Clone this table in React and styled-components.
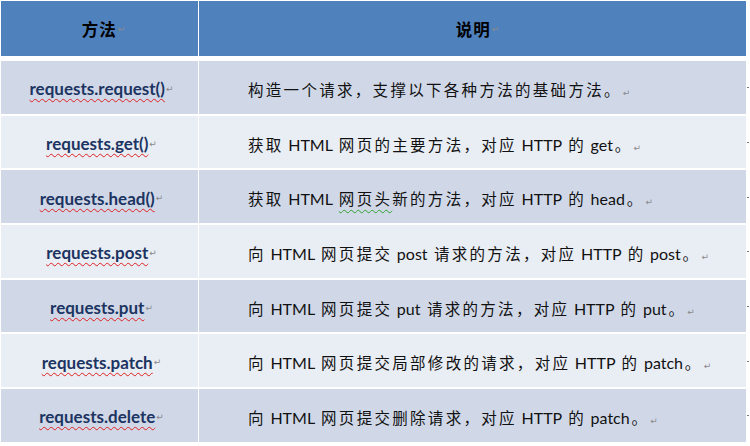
import React from 'react';
import styled, { createGlobalStyle } from 'styled-components';

const GlobalStyle = createGlobalStyle`
  html, body {
    margin: 0;
    padding: 0;
    background: #ffffff;
  }
`;

const Page = styled.div`
  width: 750px;
  height: 446px;
  padding: 1px 0 0 1px;
  box-sizing: border-box;
  overflow: hidden;
`;

const Table = styled.div`
  display: grid;
  grid-template-columns: 197px 547px;
  grid-template-rows: 58px repeat(7, 52.7px);
  column-gap: 1px;
  row-gap: 2px;
`;

const HeadCell = styled.div`
  height: 55px;
  align-self: start;
  background: #4f81bd;
  display: flex;
  align-items: center;
  justify-content: center;
  font-family: "Noto Sans CJK SC", sans-serif;
  font-weight: 700;
  font-size: 16.5px;
  letter-spacing: 1px;
  color: #000;
  padding-left: ${p => (p.$shift ? '10px' : '8px')};
`;

const Cell = styled.div`
  background: ${p => (p.$dark ? '#d0d8e8' : '#e9edf4')};
  display: flex;
  align-items: center;
  position: relative;
`;

const MethodCell = styled(Cell)`
  justify-content: center;
  padding: 3px 0 0 4px;
`;

const DescCell = styled(Cell)`
  padding: 3px 0 0 49px;

  &::after {
    content: '';
    position: absolute;
    right: -3px;
    top: 50%;
    width: 2px;
    height: 1px;
    background: #777;
  }
`;

const MethodName = styled.span`
  font-family: Lato, "Liberation Sans", sans-serif;
  font-weight: 700;
  font-size: 17px;
  color: #1c3461;
  text-decoration: underline wavy #e02020;
  text-decoration-thickness: 1px;
  text-underline-offset: 3px;
`;

const Desc = styled.span`
  font-family: "Noto Sans CJK SC", sans-serif;
  font-size: 15.5px;
  letter-spacing: 2.3px;
  color: #111;
  white-space: pre;
`;

const Latin = styled.span`
  font-family: Lato, "Liberation Sans", sans-serif;
  font-size: 16px;
  letter-spacing: 0;
  word-spacing: 0.5px;
  margin-right: 1.8px;
  color: #111;
`;

const Grammar = styled.span`
  text-decoration: underline wavy #2fa02f;
  text-decoration-thickness: 1px;
  text-underline-offset: 4px;
`;

const Mark = styled.span`
  font-family: "DejaVu Sans", sans-serif;
  font-weight: 400;
  font-size: 9px;
  color: #8a8a8a;
  margin-left: 1px;
  letter-spacing: 0;
`;

const rows = [
  ['requests.request()', '构造一个请求，支撑以下各种方法的基础方法。'],
  ['requests.get()', '获取 HTML 网页的主要方法，对应 HTTP 的 get。'],
  ['requests.head()', '获取 HTML [网页头]新的方法，对应 HTTP 的 head。'],
  ['requests.post', '向 HTML 网页提交 post 请求的方法，对应 HTTP 的 post。'],
  ['requests.put', '向 HTML 网页提交 put 请求的方法，对应 HTTP 的 put。'],
  ['requests.patch', '向 HTML 网页提交局部修改的请求，对应 HTTP 的 patch。'],
  ['requests.delete', '向 HTML 网页提交删除请求，对应 HTTP 的 patch。'],
];

// split a description into CJK runs and latin runs, [..] = grammar squiggle
function renderDesc(text) {
  const out = [];
  text.split(/(\[[^\]]+\])/).forEach((chunk, i) => {
    if (chunk.startsWith('[')) {
      out.push(<Grammar key={'g' + i}>{chunk.slice(1, -1)}</Grammar>);
      return;
    }
    chunk.split(/([\x00-\x7F]+)/).forEach((part, j) => {
      if (!part) return;
      if (/^[\x00-\x7F]+$/.test(part)) out.push(<Latin key={i + '-' + j}>{part}</Latin>);
      else out.push(part);
    });
  });
  return out;
}

export default function App() {
  return (
    <Page>
      <GlobalStyle />
      <Table>
        <HeadCell>方法<Mark>↵</Mark></HeadCell>
        <HeadCell $shift>说明<Mark>↵</Mark></HeadCell>
        {rows.map(([name, desc], i) => (
          <React.Fragment key={name}>
            <MethodCell $dark={i % 2 === 0}>
              <MethodName>{name}</MethodName>
              <Mark>↵</Mark>
            </MethodCell>
            <DescCell $dark={i % 2 === 0}>
              <Desc>
                {renderDesc(desc)}
                <Mark>↵</Mark>
              </Desc>
            </DescCell>
          </React.Fragment>
        ))}
      </Table>
    </Page>
  );
}
